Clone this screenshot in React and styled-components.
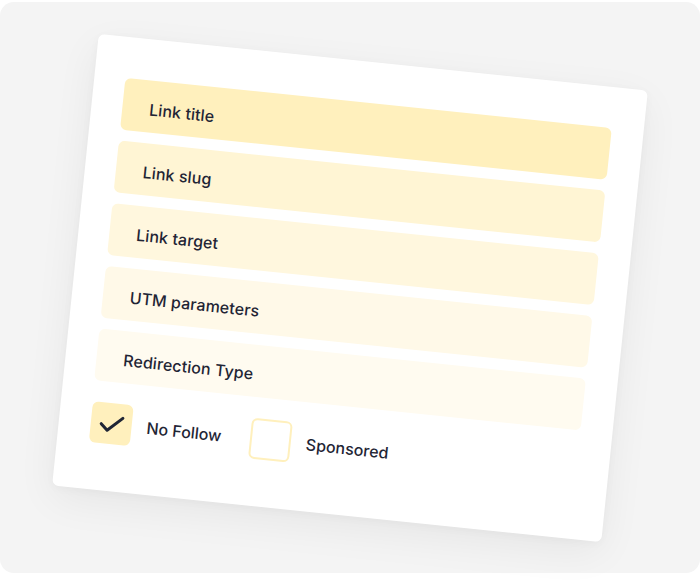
import React from "react";
import styled, { createGlobalStyle } from "styled-components";

const GlobalStyle = createGlobalStyle`
  html, body {
    margin: 0;
    padding: 0;
    background: #ffffff;
  }
  body {
    font-family: "Inter", "Noto Sans", sans-serif;
    color: #1f2535;
  }
`;

const Stage = styled.div`
  width: 700px;
  height: 582px;
  padding-top: 2px;
  box-sizing: border-box;
`;

const Panel = styled.div`
  width: 700px;
  height: 571px;
  background: #f4f4f4;
  border-radius: 14px;
  display: flex;
  align-items: center;
  justify-content: center;
`;

const Card = styled.div`
  width: 552px;
  height: 454px;
  box-sizing: border-box;
  padding: 41px 32px 0 31px;
  background: #ffffff;
  border-radius: 6px;
  box-shadow: 0 12px 40px rgba(0, 0, 0, 0.06), 0 2px 10px rgba(0, 0, 0, 0.03);
  transform: rotate(5.9deg);
  display: flex;
  flex-direction: column;
`;

const Fields = styled.div`
  display: flex;
  flex-direction: column;
  gap: 11px;
`;

const Field = styled.div`
  height: 52px;
  box-sizing: border-box;
  padding: 5px 0 0 27px;
  border-radius: 6px;
  background: ${({ $bg }) => $bg};
  display: flex;
  align-items: center;
  font-size: 16px;
  font-weight: 500;
  letter-spacing: 0.1px;
`;

const Options = styled.div`
  display: flex;
  align-items: center;
  gap: 29px;
  margin-top: 21px;
  padding-left: 1px;
`;

const Option = styled.div`
  display: flex;
  align-items: center;
  gap: 15px;
  font-size: 16px;
  font-weight: 500;
`;

const Box = styled.div`
  width: 41px;
  height: 41px;
  box-sizing: border-box;
  border-radius: 6px;
  background: ${({ $checked }) => ($checked ? "#fff0bd" : "#ffffff")};
  border: 2px solid #fff0bd;
  display: flex;
  align-items: center;
  justify-content: center;
`;

const fields = [
  { label: "Link title", bg: "#fff0bd" },
  { label: "Link slug", bg: "#fff5d4" },
  { label: "Link target", bg: "#fff7de" },
  { label: "UTM parameters", bg: "#fff9e8" },
  { label: "Redirection Type", bg: "#fffbf0" },
];

function Check() {
  return (
    <svg width="26" height="20" viewBox="0 0 26 20" fill="none">
      <path
        d="M2.5 10.5L9 16.5L23.5 3"
        stroke="#1f2535"
        strokeWidth="3"
        strokeLinecap="round"
        strokeLinejoin="round"
      />
    </svg>
  );
}

export default function App() {
  return (
    <Stage>
      <GlobalStyle />
      <Panel>
        <Card>
          <Fields>
            {fields.map((f) => (
              <Field key={f.label} $bg={f.bg}>
                {f.label}
              </Field>
            ))}
          </Fields>
          <Options>
            <Option>
              <Box $checked>
                <Check />
              </Box>
              No Follow
            </Option>
            <Option>
              <Box />
              Sponsored
            </Option>
          </Options>
        </Card>
      </Panel>
    </Stage>
  );
}
